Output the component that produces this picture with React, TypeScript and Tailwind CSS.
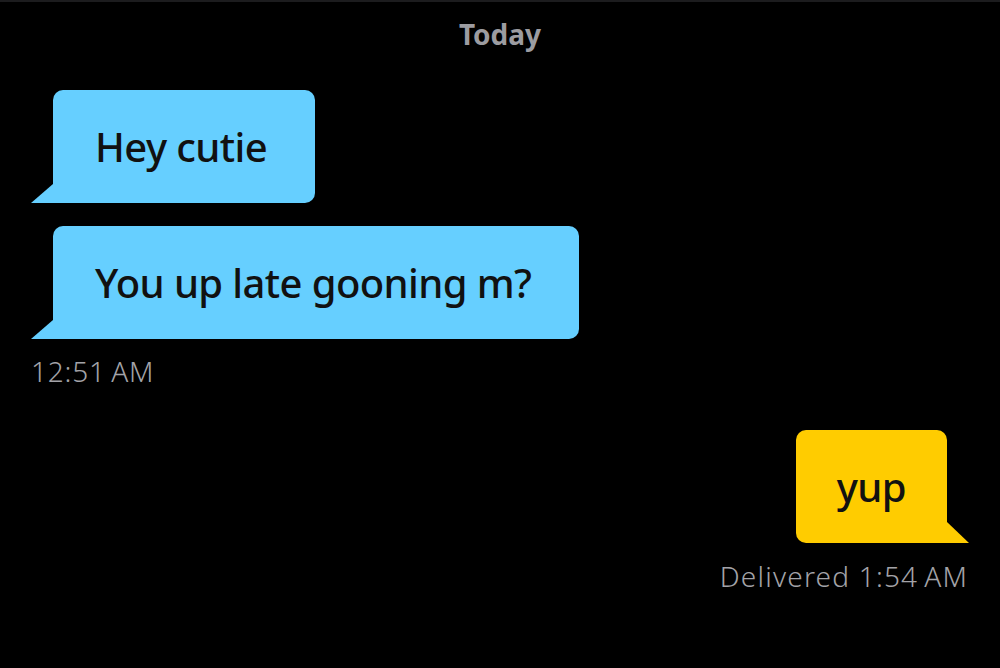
export default function App() {
  return (
    <div className="w-[1000px] h-[668px] overflow-hidden bg-black border-t-2 border-[#1c1c1e] font-['Noto_Sans',sans-serif] flex flex-col">
      <div className="pt-[15px] text-center text-[28px] leading-[34px] font-bold text-[#9c9ca1]">Today</div>

      <div className="mt-[39px] ml-[53px] flex flex-col items-start gap-[23px]">
        <Bubble side="left">Hey cutie</Bubble>
        <Bubble side="left">You up late gooning m?</Bubble>
      </div>
      <div className="mt-[16px] ml-[31px] text-[28px] leading-[32px] tracking-[0.8px] font-light text-[#a3a3a8]">12:51&#8201;AM</div>

      <div className="mt-[43px] mr-[53px] self-end">
        <Bubble side="right">yup</Bubble>
      </div>
      <div className="mt-[17px] mr-[32px] self-end text-[28px] leading-[32px] tracking-[1.2px] font-light text-[#a3a3a8]">
        Delivered 1:54&#8201;AM
      </div>
    </div>
  );
}

function Bubble({ side, children }: { side: "left" | "right"; children: React.ReactNode }) {
  const left = side === "left";
  return (
    <div
      className={
        left
          ? "relative h-[113px] flex items-center pl-[42px] pr-[48px] rounded-[10px] rounded-bl-none bg-[#66cfff]"
          : "relative h-[113px] flex items-center px-[41px] rounded-[10px] rounded-br-none bg-[#ffcc00]"
      }
    >
      <span className="text-[40px] leading-none font-medium tracking-[-0.6px] text-[#111]">{children}</span>
      {left ? (
        <span className="absolute -left-[22px] bottom-0 w-[22px] h-[19px] bg-[#66cfff] [clip-path:polygon(100%_0,100%_100%,0_100%)]" />
      ) : (
        <span className="absolute -right-[22px] bottom-0 w-[22px] h-[21px] bg-[#ffcc00] [clip-path:polygon(0_0,100%_100%,0_100%)]" />
      )}
    </div>
  );
}
